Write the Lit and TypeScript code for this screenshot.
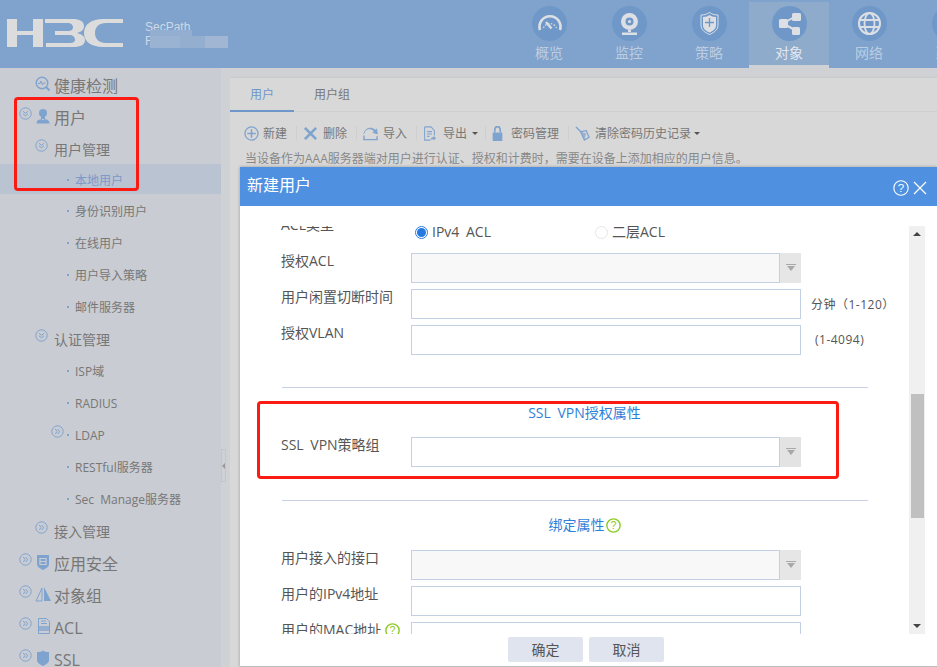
import { LitElement, html, css, svg } from "lit";
import { customElement } from "lit/decorators.js";

const BL = "#7fa3cf";

const toggle = (open: boolean) => html`<svg class="tg" viewBox="0 0 13 13">
  <circle cx="6.5" cy="6.5" r="5.7" fill="none" stroke="${BL}" stroke-width="1"/>
  ${open
    ? svg`<path d="M4 4.3l2.5 2 2.5-2M4 6.8l2.5 2 2.5-2" fill="none" stroke="${BL}" stroke-width="1"/>`
    : svg`<path d="M4.2 4l2 2.5-2 2.5M6.7 4l2 2.5-2 2.5" fill="none" stroke="${BL}" stroke-width="1"/>`}
</svg>`;

const sideIcons: Record<string, unknown> = {
  health: svg`<circle cx="7" cy="7" r="5.8" fill="none" stroke="${BL}" stroke-width="1.4"/><path d="M11 11l3.5 3.5" stroke="${BL}" stroke-width="2"/><path d="M3 7.5h2l1-2.5 1.5 4 1-2h2" fill="none" stroke="${BL}" stroke-width="1"/>`,
  user: svg`<circle cx="8" cy="5" r="4" fill="${BL}"/><path d="M6 8h4v3H6z" fill="${BL}"/><path d="M1.500 15.500c0-3 2-4 5-4.500l1.500 1.500 1.500-1.500c3 .5 5 1.500 5 4.500z" fill="${BL}"/>`,
  app: svg`<path d="M2 1h12v9c0 3-3 4.500-6 6-3-1.500-6-3-6-6z" fill="${BL}"/><path d="M5 4.500h6v6H5z" fill="none" stroke="#c9ccd2" stroke-width="1.200"/><path d="M5 7.500h6" stroke="#c9ccd2"/>`,
  group: svg`<path d="M7 2v13H1z" fill="none" stroke="${BL}"/><path d="M9 1v14h7z" fill="${BL}"/>`,
  acl: svg`<path d="M3.500.500h8l3 3v12h-11z" fill="none" stroke="${BL}"/><path d="M4 8h10v5H4z" fill="${BL}" opacity=".7"/><path d="M6 3h5M6 5.500h6" stroke="${BL}"/>`,
  ssl: svg`<path d="M2 2c3 0 4.500-.5 6-1.500 1.500 1 3 1.500 6 1.500v8c0 3-3 4.500-6 6-3-1.500-6-3-6-6z" fill="${BL}"/>`,
};

type Row = { t: string; l: 1 | 2 | 3; tg?: "open" | "closed"; icon?: string; sel?: boolean };
const rows: Row[] = [
  { t: "健康检测", l: 1, icon: "health" },
  { t: "用户", l: 1, tg: "open", icon: "user" },
  { t: "用户管理", l: 2, tg: "open" },
  { t: "本地用户", l: 3, sel: true },
  { t: "身份识别用户", l: 3 },
  { t: "在线用户", l: 3 },
  { t: "用户导入策略", l: 3 },
  { t: "邮件服务器", l: 3 },
  { t: "认证管理", l: 2, tg: "open" },
  { t: "ISP域", l: 3 },
  { t: "RADIUS", l: 3 },
  { t: "LDAP", l: 3, tg: "closed" },
  { t: "RESTful服务器", l: 3 },
  { t: "Sec Manage服务器", l: 3 },
  { t: "接入管理", l: 2, tg: "closed" },
  { t: "应用安全", l: 1, tg: "closed", icon: "app" },
  { t: "对象组", l: 1, tg: "closed", icon: "group" },
  { t: "ACL", l: 1, tg: "closed", icon: "acl" },
  { t: "SSL", l: 1, tg: "closed", icon: "ssl" },
];

const W = "#dcdfe4";
const navItems: { t: string; i: unknown; a?: boolean }[] = [
  { t: "概览", i: svg`<path d="M8 24A10.500 10.500 0 1 1 28 24" fill="none" stroke="${W}" stroke-width="2.600"/><path d="M11.500 22a7 7 0 0 1 13 0" fill="none" stroke="${W}" stroke-width="1.200" stroke-dasharray="1.500 1.500"/><path d="M14 16l5.500 6.500" stroke="${W}" stroke-width="2.400"/>` },
  { t: "监控", i: svg`<circle cx="17.500" cy="15.500" r="8.500" fill="${W}"/><circle cx="17.500" cy="15.500" r="4" fill="#6f98c9"/><circle cx="17.500" cy="15.500" r="1.500" fill="${W}"/><path d="M16 24h3v2h-3z" fill="${W}"/><path d="M10 26.500h15v2.500H10z" fill="${W}"/>` },
  { t: "策略", i: svg`<path d="M9 9c4 0 6-1 8.500-2.500C20 8 22 9 26 9v10c0 5-4 7.500-8.500 9.500C13 26.500 9 24 9 19z" fill="none" stroke="${W}" stroke-width="1"/><path d="M11 11c3 0 5-1 6.500-2 1.500 1 3.500 2 6.500 2v8c0 4-3 6-6.500 7.500C14 25 11 23 11 19z" fill="${W}"/><path d="M17.500 12v9M13 16.500h9" stroke="#6f98c9" stroke-width="1.300"/>` },
  { t: "对象", a: true, i: svg`<path d="M11 17.500l13-7.500M11 17.500l13 7" stroke="${W}" stroke-width="2"/><rect x="7" y="13" width="9" height="9" rx="1.500" fill="${W}"/><rect x="20" y="7" width="9" height="8" rx="1.500" fill="${W}"/><rect x="20" y="21" width="8" height="8" rx="1.500" fill="${W}"/>` },
  { t: "网络", i: svg`<circle cx="17.500" cy="17.500" r="10.500" fill="none" stroke="${W}" stroke-width="2"/><ellipse cx="17.500" cy="17.500" rx="5" ry="10.500" fill="none" stroke="${W}" stroke-width="1.800"/><path d="M8 14h19M8 21h19" stroke="${W}" stroke-width="1.800"/>` },
  { t: "系统", i: svg`<circle cx="17.500" cy="17.500" r="9" fill="none" stroke="${W}" stroke-width="2"/>` },
];

const tool = (t: string, icon: unknown, cls = "", caret = false) => html`<span class="item ${cls}">
  <svg class="ti" viewBox="0 0 16 16" preserveAspectRatio="none">${icon}</svg><span class="tt">${t}</span>${caret ? html`<i class="caret"></i>` : ""}
</span>`;

const select = (disabled: boolean) => html`<div class="sel ${disabled ? "dis" : ""}"><div class="selbox"></div><div class="selbtn"><svg viewBox="0 0 12 8" width="12" height="8"><path d="M1 .5h10" stroke="#a8a8a8"/><path d="M2 2h8L6 7z" fill="#a8a8a8"/></svg></div></div>`;

const help = html`<svg class="help" viewBox="0 0 14 14"><circle cx="7" cy="7" r="6.200" fill="none" stroke="#8ccb22" stroke-width="1.300"/><text x="7" y="10.500" text-anchor="middle" font-size="10" fill="#8ccb22" font-family="Liberation Sans">?</text></svg>`;

@customElement("app-root")
export class AppRoot extends LitElement {
  static styles = css`
    :host { display: block; width: 937px; height: 667px; overflow: hidden; position: relative; font-family: "Open Sans", "Noto Sans CJK SC", sans-serif; background: #d0d1d5; color: #777; word-spacing: 3px; }
    .hdr { height: 68px; background: #7fa3cc; display: grid; grid-template-columns: 509px 1fr; overflow: hidden; }
    .brand { display: flex; align-items: flex-start; position: relative; }
    .logo { width: 116px; height: 28px; margin: 19px 0 0 7px; flex: none; }
    .prod { margin: 20px 0 0 22px; color: #cfd9e6; font: 12px/14px "Liberation Sans", sans-serif; }
    .blur { position: absolute; height: 12px; top: 36px; background: #9bb3d2; }
    .b1 { left: 150px; width: 30px; } .b2 { left: 180px; width: 25px; background: #94aed0; } .b3 { left: 205px; width: 23px; background: #a0b6d3; }
    .b0 { left: 150px; width: 42px; top: 30px; height: 6px; background: #93aed1; }
    .nav { display: flex; }
    .tab { flex: none; width: 80px; height: 66px; margin-top: 2px; padding-top: 4px; box-sizing: border-box; display: flex; flex-direction: column; align-items: center; color: #bccde2; font-size: 14px; line-height: 20px; }
    .tab.on { background: #8eabcc; border-bottom: 3px solid #d0d1d5; color: #e2e8f0; }
    .circ { width: 35px; height: 35px; border-radius: 50%; background: #6f98c9; margin-bottom: 2px; display: block; flex: none; }

    .body { display: grid; grid-template-columns: 221px 9px 1fr; height: 599px; }
    .side { background: #c9ccd2; overflow: hidden; }
    .row { height: 32px; display: flex; align-items: center; box-sizing: border-box; }
    .row.sel { background: #b9c3d1; color: #7d98c9; }
    .rt { line-height: 20px; padding-top: 4px; white-space: nowrap; }
    .l1 .rt { padding-top: 3px; }
    .slot { width: 13px; flex: none; height: 13px; }
    .tg { width: 13px; height: 13px; flex: none; margin-top: -6px; display: block; }
    .l1 { padding-left: 19px; font-size: 16px; }
    .l2 { padding-left: 35px; font-size: 14px; }
    .l3 { padding-left: 51px; font-size: 12px; }
    .si { width: 16px; height: 16px; margin: 0 3px; flex: none; }
    .l2 .slot, .l2 .tg { margin-right: 6px; }
    .l3 .slot, .l3 .tg { margin-right: 3px; }
    .dot { width: 2px; height: 2px; background: #7fa3cf; margin: 2px 6px 0 0; flex: none; }
    .split { display: flex; justify-content: flex-start; padding-top: 381px; box-sizing: border-box; }
    .grip { width: 5px; height: 33px; border: 1px solid #c3c6cc; box-sizing: border-box; display: flex; align-items: center; justify-content: center; }
    .grip i { border: 3px solid transparent; border-right-color: #999; border-left: 0; }
    .main { padding-top: 10px; overflow: hidden; }
    .panel { background: #d8d8d8; height: 100%; box-shadow: 0 0 2px #bbb; }
    .tabs { height: 33px; display: flex; border-bottom: 1px solid #cfcfcf; font-size: 12px; line-height: 34px; }
    .tabs span { padding: 0 20px; }
    .tabs .on { color: #6f97c9; height: 32px; border-bottom: 2px solid #6f97c9; }
    .bar { display: flex; align-items: center; height: 20px; margin: 11px 0 0 14px; font-size: 12px; color: #777; line-height: 20px; }
    .item { display: flex; align-items: center; gap: 5px; }
    .tt { padding-top: 1px; }
    .ti { width: 15px; height: 15px; flex: none; }
    .sep { width: 1px; height: 14px; background: #cfcfcf; margin: 0 6px 0 9px; }
    .g4 { gap: 4px; } .g7 { gap: 7px; } .g8 { gap: 8px; }
    .narrow .ti { width: 13px; margin-right: 0; }
    .narrow .tt { margin-left: 0; }
    .lock .ti { width: 11px; }
    .caret { border: 3px solid transparent; border-top: 3px solid #555; border-bottom: 0; margin: 0 -1px 0 -2px; }
    .narrow .caret { margin-right: -2px; }
    .hint { margin: 8px 0 0 15px; font-size: 12px; line-height: 16px; color: #888; white-space: nowrap; }

    .dlg { position: absolute; left: 240px; top: 167px; width: 697px; height: 499px; background: #fff; box-shadow: 0 0 3px #999; display: flex; flex-direction: column; border-bottom: 1px solid #bbb; box-sizing: content-box; }
    .dh { height: 39px; background: #4f90e0; flex: none; display: flex; align-items: center; padding: 0 10px 0 7px; color: #fff; font-size: 16px; line-height: 20px; justify-content: space-between; }
    .dht { margin-top: -3px; }
    .dhi { display: flex; align-items: center; gap: 4px; margin-top: 3px; }
    .db { flex: 1; display: flex; padding-top: 20px; min-height: 0; }
    .vp { width: 669px; overflow: hidden; flex: none; }
    .form { margin: -9px 0 0 41px; font-size: 14px; color: #555; display: flex; flex-direction: column; }
    .fr { display: grid; grid-template-columns: 130px 390px auto; height: 30px; margin-bottom: 6px; line-height: 16px; flex: none; }
    .suffix { padding: 8px 0 0 10px; font-size: 12px; white-space: nowrap; line-height: 16px; letter-spacing: .5px; }
    .suffix.b { padding-left: 14px; padding-top: 7px; }
    .radios { display: flex; align-items: center; }
    .radio { display: flex; align-items: center; gap: 4px; width: 180px; padding-left: 4px; box-sizing: border-box; }
    .radio b { width: 13px; height: 13px; border-radius: 50%; border: 1px solid #e3e6ea; box-sizing: border-box; display: flex; align-items: center; justify-content: center; }
    .radio.on b { border-color: #2b7ce0; }
    .radio.on b::after { content: ""; width: 9px; height: 9px; border-radius: 50%; background: #2478e0; }
    .inp { border: 1px solid #c3d0e3; box-sizing: border-box; height: 30px; }
    .sel { display: flex; height: 30px; }
    .selbox { flex: 1; border: 1px solid #c3d0e3; box-sizing: border-box; }
    .selbtn { width: 21px; background: #e3e3e3; display: flex; align-items: center; justify-content: center; }
    .dis .selbox { background: #f8f8f8; }
    .dis .selbtn { background: #e6e6e6; }
    hr { border: 0; height: 1px; background: #c7d3e4; width: 586px; margin: 0 0 0 1px; flex: none; }
    .st { height: 20px; line-height: 20px; color: #2f7fd8; font-size: 14px; display: flex; justify-content: center; align-items: center; width: 607px; flex: none; gap: 1px; }
    .hr1 { margin-top: 26px; }
    .st1 { margin: 15px 0 14px; }
    .hr2 { margin-top: 27px; }
    .st2 { margin: 14px 0 15px; }
    .help { width: 15px; height: 15px; flex: none; }
    .lbl { display: flex; align-items: center; height: 16px; gap: 1px; white-space: nowrap; }
    .lbl .help { margin-left: 3px; }
    .sb { width: 16px; background: #f0f0f0; display: flex; flex-direction: column; align-items: center; flex: none; }
    .sba { height: 16px; display: flex; align-items: center; justify-content: center; flex: none; }
    .up { border: 4px solid transparent; border-top: 0; border-bottom: 4px solid #444; }
    .dn { border: 4px solid transparent; border-bottom: 0; border-top: 4px solid #444; }
    .thumb { width: 13px; height: 124px; background: #c0c0c0; margin: 152px 0 0; }
    .sbs { flex: 1; }
    .df { height: 32px; flex: none; display: flex; justify-content: flex-start; gap: 6px; padding: 3px 0 0 268px; box-sizing: border-box; }
    .btn { width: 75px; height: 25px; background: #dfe4ef; border-radius: 2px; color: #555; font-size: 14px; line-height: 25px; text-align: center; }
    .red { position: absolute; border: 3px solid #fb1b12; border-radius: 4px; box-sizing: border-box; }
    .r1 { left: 14px; top: 97px; width: 125px; height: 94px; }
    .r2 { left: 257px; top: 401px; width: 582px; height: 78px; }
  `;

  private sideRow(r: Row) {
    return html`<div class="row l${r.l} ${r.sel ? "sel" : ""}">
      ${r.tg ? toggle(r.tg === "open") : html`<span class="slot"></span>`}
      ${r.icon ? html`<svg class="si" viewBox="0 0 16 16">${sideIcons[r.icon]}</svg>` : ""}
      ${r.l === 3 ? html`<span class="dot"></span>` : ""}
      <span class="rt">${r.t}</span>
    </div>`;
  }

  render() {
    return html`
      <div class="hdr">
        <div class="brand">
          <svg class="logo" viewBox="0 0 116 28" fill="#dcdcdc">
            <path d="M0 0h10v12h16V0h10v28H26V16H10v12H0z"/>
            <path d="M38 0h28c6 0 11 2 11 7 0 4-3 6-7 7 4 1 8 3 8 7 0 5-5 7-11 7H39v-4h24c3 0 5-1 5-3 0-3-2-5-6-5H48v-4h13c3 0 5-1 5-4 0-2-2-4-5-4H38z"/>
            <path d="M116 0H96C85 0 77 5 77 14s8 14 19 14h20v-4H99c-7 0-11-4-11-10s4-10 11-10h17z"/>
          </svg>
          <div class="prod">SecPath<br />F</div>
          <span class="blur b0"></span><span class="blur b1"></span><span class="blur b2"></span><span class="blur b3"></span>
        </div>
        <div class="nav">
          ${navItems.map((n) => html`<div class="tab ${n.a ? "on" : ""}"><svg class="circ" viewBox="0 0 35 35">${n.i}</svg>${n.t}</div>`)}
        </div>
      </div>
      <div class="body">
        <div class="side">${rows.map((r) => this.sideRow(r))}</div>
        <div class="split"><div class="grip"><i></i></div></div>
        <div class="main">
          <div class="panel">
            <div class="tabs"><span class="on">用户</span><span>用户组</span></div>
            <div class="bar">
              ${tool("新建", svg`<circle cx="8" cy="8" r="7" fill="none" stroke="${BL}" stroke-width="1.400"/><path d="M8 3.500v9M3.500 8h9" stroke="${BL}" stroke-width="1.600"/>`, "g4")}
              <span class="sep"></span>
              ${tool("删除", svg`<path d="M2 2l12 12M14 2L2 14" stroke="${BL}" stroke-width="2.800"/>`)}
              <span class="sep"></span>
              ${tool("导入", svg`<path d="M1 8c1-5 6-6 9-4l2 1.500-1.500 1.500 5 1.500-1-5.500-1.500 1.500C10 1 3 1 1 8z" fill="${BL}" stroke="${BL}" stroke-width=".6"/><path d="M1 10v4.500h14V11" fill="none" stroke="${BL}" stroke-width="1.500"/>`)}
              <span class="sep"></span>
              ${tool("导出", svg`<path d="M2 1h8l4 4v5M2 1v14h7" fill="none" stroke="${BL}" stroke-width="1.300"/><path d="M5 6h6M5 8.500h6M5 11h3" stroke="${BL}" stroke-width="1.200"/><path d="M9 15c1-3 3-3 4-3v-1.500l3 2.500-3 2.500V14c-1 0-3 0-4 1z" fill="${BL}"/>`, "g7 narrow", true)}
              <span class="sep"></span>
              ${tool("密码管理", svg`<path d="M1 7h14v9H1z" fill="${BL}"/><path d="M4 7V4.500a4 4 0 0 1 8 0V7" fill="none" stroke="${BL}" stroke-width="2.400"/>`, "g8 lock")}
              <span class="sep"></span>
              ${tool("清除密码历史记录", svg`<path d="M1 1l6 6" stroke="${BL}" stroke-width="1.500"/><path d="M6 6l6-1 3 7-5 3z" fill="none" stroke="${BL}" stroke-width="1.300"/><path d="M6 6l4 9 2-7z" fill="${BL}" opacity=".7"/>`, "", true)}
            </div>
            <div class="hint">当设备作为AAA服务器端对用户进行认证、授权和计费时，需要在设备上添加相应的用户信息。</div>
          </div>
        </div>
      </div>

      <div class="dlg">
        <div class="dh">
          <span class="dht">新建用户</span>
          <span class="dhi">
            <svg width="16" height="16" viewBox="0 0 16 16"><circle cx="8" cy="8" r="7.200" fill="none" stroke="#fff" stroke-width="1.100"/><text x="8" y="12" text-anchor="middle" font-size="11.500" fill="#fff" font-family="Liberation Sans">?</text></svg>
            <svg width="14" height="14" viewBox="0 0 14 14"><path d="M1 1l12 12M13 1L1 13" stroke="#fff" stroke-width="1.200"/></svg>
          </span>
        </div>
        <div class="db">
          <div class="vp">
            <div class="form">
              <div class="fr">
                <div class="lbl">ACL类型</div>
                <div class="radios">
                  <span class="radio on"><b></b>IPv4 ACL</span>
                  <span class="radio"><b></b>二层ACL</span>
                </div>
              </div>
              <div class="fr"><div class="lbl">授权ACL</div>${select(true)}</div>
              <div class="fr"><div class="lbl">用户闲置切断时间</div><div class="inp"></div><div class="suffix">分钟（1-120）</div></div>
              <div class="fr"><div class="lbl">授权VLAN</div><div class="inp"></div><div class="suffix b">(1-4094)</div></div>
              <hr class="hr1" />
              <div class="st st1">SSL VPN授权属性</div>
              <div class="fr"><div class="lbl">SSL VPN策略组</div>${select(false)}</div>
              <hr class="hr2" />
              <div class="st st2">绑定属性${help}</div>
              <div class="fr"><div class="lbl">用户接入的接口</div>${select(true)}</div>
              <div class="fr"><div class="lbl">用户的IPv4地址</div><div class="inp"></div></div>
              <div class="fr"><div class="lbl">用户的MAC地址${help}</div><div class="inp"></div></div>
            </div>
          </div>
          <div class="sb">
            <div class="sba"><i class="up"></i></div>
            <div class="thumb"></div>
            <div class="sbs"></div>
            <div class="sba"><i class="dn"></i></div>
          </div>
        </div>
        <div class="df"><div class="btn">确定</div><div class="btn">取消</div></div>
      </div>

      <div class="red r1"></div>
      <div class="red r2"></div>
    `;
  }
}
